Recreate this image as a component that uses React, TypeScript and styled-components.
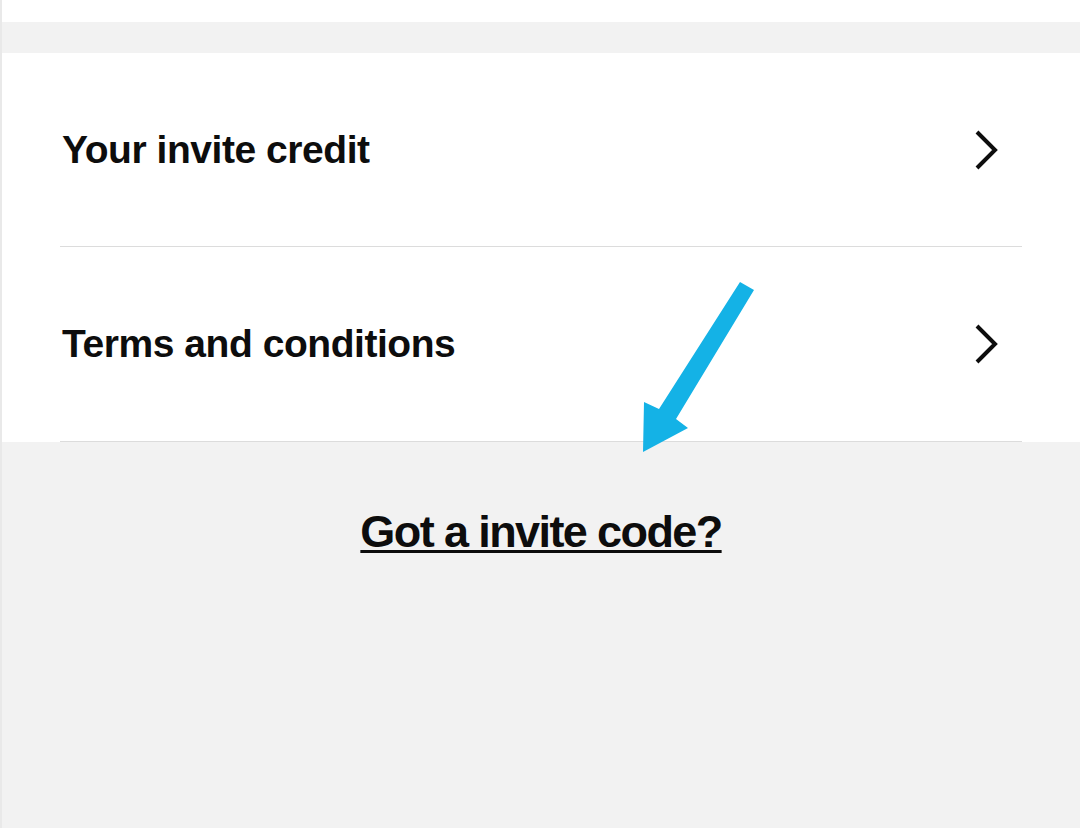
import styled, { createGlobalStyle } from "styled-components";

const GlobalStyle = createGlobalStyle`
  html, body {
    margin: 0;
    padding: 0;
    background: #f2f2f2;
  }
  body {
    font-family: "Liberation Sans", Arial, sans-serif;
    color: #0d0d0d;
  }
`;

const rows = ["Your invite credit", "Terms and conditions"];

function Chevron() {
  return (
    <svg width="26" height="42" viewBox="0 0 26 42" fill="none">
      <path
        d="M3 3 L21 21 L3 39"
        stroke="#0d0d0d"
        strokeWidth="4"
        strokeLinecap="butt"
        strokeLinejoin="miter"
      />
    </svg>
  );
}

// blue pointer drawn over the list, coordinates in page space
function Arrow() {
  return (
    <ArrowMark width="160" height="200" viewBox="620 270 160 200">
      <path
        d="M740 282 L754 290 L676 419 L688 428 L643 452 L644 402 L659 409 Z"
        fill="#14b2e6"
      />
    </ArrowMark>
  );
}

export default function App() {
  return (
    <Page>
      <GlobalStyle />
      <TopStrip />
      <Band />
      <ListCard>
        {rows.map((label) => (
          <Row key={label}>
            <RowLabel>{label}</RowLabel>
            <Chevron />
          </Row>
        ))}
        <Arrow />
      </ListCard>
      <Footer>
        <InviteLink href="#">Got a invite code?</InviteLink>
      </Footer>
    </Page>
  );
}

const Page = styled.div`
  width: 1080px;
  height: 828px;
  display: flex;
  flex-direction: column;
  background: #f2f2f2;
  border-left: 2px solid #e9e9e9;
  box-sizing: border-box;
  overflow: hidden;
`;

const TopStrip = styled.div`
  height: 22px;
  background: #ffffff;
`;

const Band = styled.div`
  height: 31px;
  background: #f2f2f2;
`;

const ListCard = styled.div`
  position: relative;
  background: #ffffff;
  padding: 0 58px;
`;

const Row = styled.div`
  height: 194px;
  display: flex;
  align-items: center;
  justify-content: space-between;
  border-bottom: 1px solid #dcdcdc;
  padding: 0 22px 0 2px;
  &:first-child {
    height: 193px;
  }
`;

const RowLabel = styled.span`
  font-size: 39px;
  font-weight: 700;
  letter-spacing: -0.45px;
`;

const ArrowMark = styled.svg`
  position: absolute;
  left: 618px;
  top: 217px;
`;

const Footer = styled.div`
  flex: 1;
  display: flex;
  justify-content: center;
  padding-top: 64px;
`;

const InviteLink = styled.a`
  height: 60px;
  font-size: 45px;
  font-weight: 700;
  letter-spacing: -1.6px;
  color: #0d0d0d;
  text-decoration: underline;
  text-decoration-thickness: 3px;
  text-underline-offset: 3px;
`;
